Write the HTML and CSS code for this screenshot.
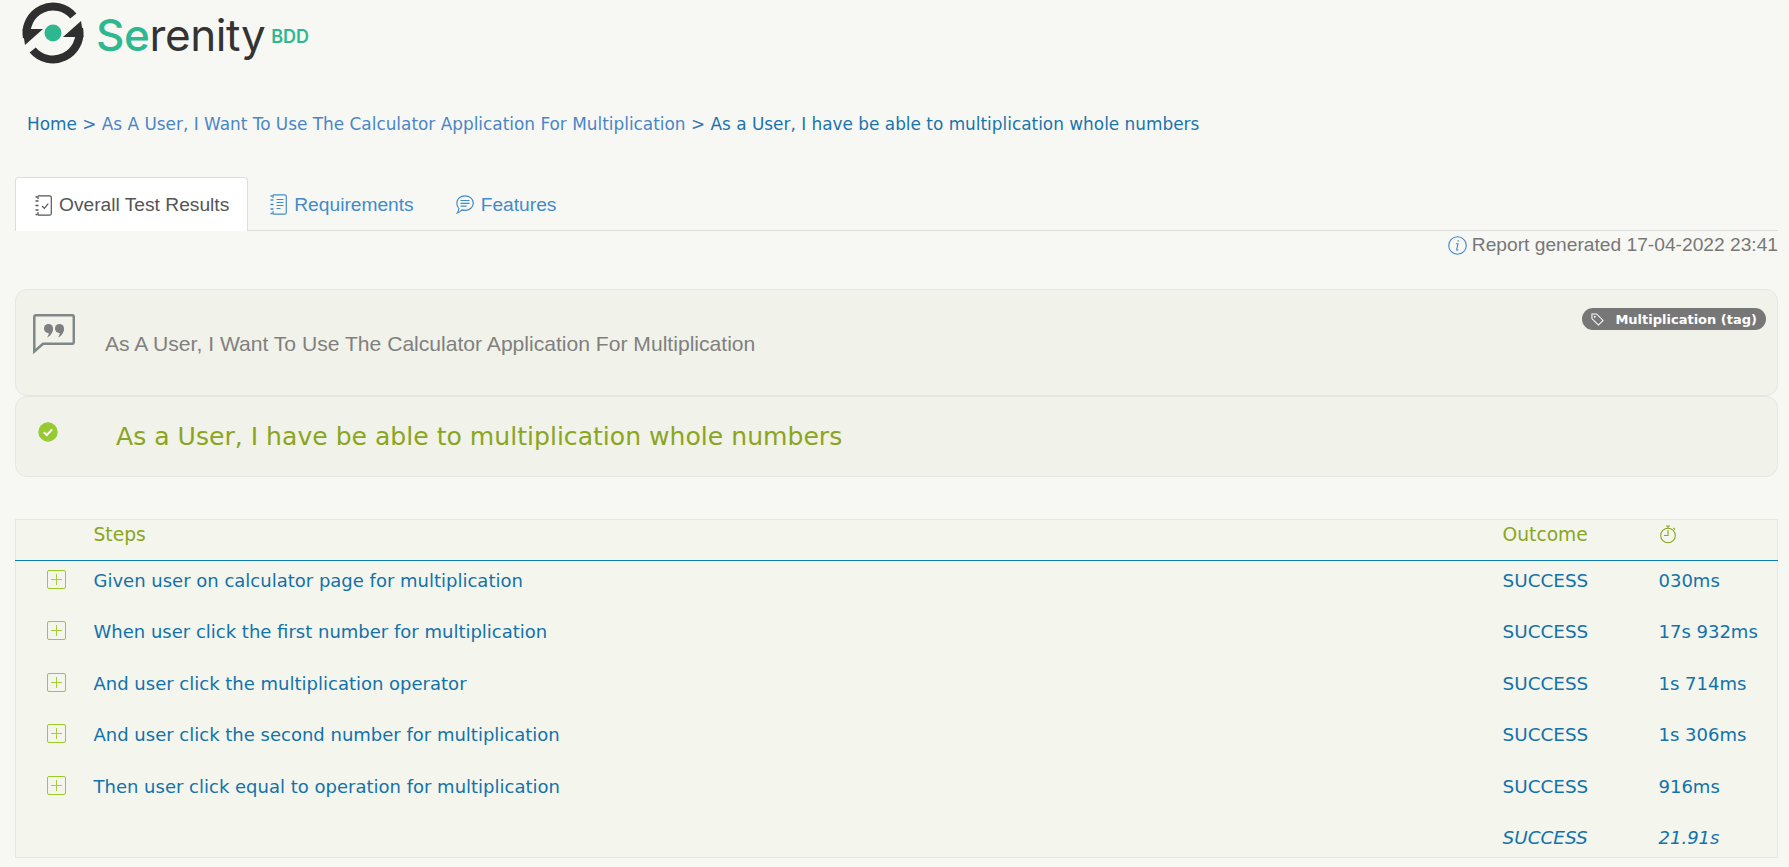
FILE: index.html
```html
<!DOCTYPE html>
<html lang="en">
<head>
<meta charset="utf-8">
<title>Serenity BDD</title>
<link rel="stylesheet" href="styles.css">
</head>
<body>
<header class="logo">
  <svg class="logo-mark" viewBox="0 0 62 62" width="62" height="62">
    <g fill="#2f2f2f">
      <path d="M51.3 14A26.5 26.5 0 0 0 4.9 35.6" fill="none" stroke="#2f2f2f" stroke-width="8"/>
      <path d="M0.5 27H21L3 43Z"/>
    </g>
    <g transform="rotate(180 31 31)" fill="#2f2f2f">
      <path d="M51.3 14A26.5 26.5 0 0 0 4.9 35.6" fill="none" stroke="#2f2f2f" stroke-width="8"/>
      <path d="M0.5 27H21L3 43Z"/>
    </g>
    <circle cx="31" cy="31" r="8.5" fill="#2fb88f"/>
  </svg>
  <span class="logo-name"><span class="logo-se">Se</span>renity</span>
  <span class="logo-bdd">BDD</span>
</header>

<nav class="crumbs">
  <a>Home</a> &gt; <a class="crumb-feature">As A User, I Want To Use The Calculator Application For Multiplication</a> &gt; <span>As a User, I have be able to multiplication whole numbers</span>
</nav>

<ul class="tabs">
  <li class="tab tab-active">
    <svg class="tab-icon" viewBox="0 0 17 21" width="17" height="21" fill="none" stroke="currentColor" stroke-width="1.2"><path d="M3 .8H14.500a1.800 1.800 0 0 1 1.800 1.800V18.400a1.800 1.800 0 0 1-1.800 1.800H3M3 .8V4M3 17v3.200"/><path d="M.5 6h3M.5 10.500h3M.5 15h3M.5 19.500h2M.5 2h2" stroke-width="1.500"/><path d="M7 11l2.300 2.300 4-4.600"/></svg>
    Overall Test Results
  </li>
  <li class="tab">
    <svg class="tab-icon" viewBox="0 0 17 21" width="17" height="21" fill="none" stroke="currentColor" stroke-width="1.2"><path d="M3 .8H14.500a1.800 1.800 0 0 1 1.800 1.800V18.400a1.800 1.800 0 0 1-1.800 1.800H3M3 .8V4M3 17v3.200"/><path d="M.5 6h3M.5 10.500h3M.5 15h3M.5 19.500h2M.5 2h2" stroke-width="1.500"/><path d="M6.500 5.500h7M6.500 8.500h7M6.500 11.500h7M6.500 14.500h4"/></svg>
    Requirements
  </li>
  <li class="tab">
    <svg class="tab-icon" viewBox="0 0 18 19" width="18" height="19" fill="none" stroke="currentColor" stroke-width="1.200"><path d="M9 .8c4.600 0 8.300 3.200 8.300 7.300S13.600 15.400 9 15.400c-1.100 0-2.200-.2-3.100-.5-1.100 1.200-2.800 2.600-4.700 3.100 .9-1.200 1.500-2.500 1.600-4.500C1.700 12.100 .8 10.200 .8 8.100 .8 4 4.400 .8 9 .8Z"/><path d="M4.500 5.500h9M4.500 8.300h9M4.500 11.100h6"/></svg>
    Features
  </li>
</ul>

<p class="generated">
  <svg class="info" viewBox="0 0 19 19" width="19" height="19" fill="none" stroke="#3f86cf" stroke-width="1.100"><circle cx="9.500" cy="9.500" r="8.800"/><path d="M8 7.800h2L8.600 14h1.800"/><circle cx="10.200" cy="5" r=".8" fill="#3f86cf" stroke="none"/></svg>
  Report generated 17-04-2022 23:41
</p>

<section class="panel panel-feature">
  <svg class="quote" viewBox="0 0 42 40" width="42" height="40">
    <path d="M1.300 3a1.800 1.800 0 0 1 1.800-1.800H39a1.800 1.800 0 0 1 1.800 1.800V28a1.800 1.800 0 0 1-1.800 1.800H10L1.300 37.500Z" fill="none" stroke="#7f8787" stroke-width="2.500"/>
    <g fill="#7f7f7f">
      <circle cx="15.500" cy="14.500" r="4.500"/>
      <circle cx="26.500" cy="14.500" r="4.500"/>
      <path d="M20 14.500C20 19 17 22.500 14 23.500 15.500 21.500 16 20 15.500 18.500Z"/>
      <path d="M31 14.500C31 19 28 22.500 25 23.500 26.500 21.500 27 20 26.500 18.500Z"/>
    </g>
  </svg>
  <span class="feature-title">As A User, I Want To Use The Calculator Application For Multiplication</span>
  <span class="tag">
    <svg class="tag-icon" viewBox="0 0 14 14" width="13" height="13" fill="none" stroke="#fff" stroke-width="1.100"><path d="M1 1h5l7 7-5 5-7-7Z"/><circle cx="4" cy="4" r="1" fill="#fff" stroke="none"/></svg>
    Multiplication (tag)
  </span>
</section>

<section class="panel panel-scenario">
  <svg class="ok" viewBox="0 0 20 20" width="20" height="20"><circle cx="10" cy="10" r="9.700" fill="#97c933"/><path d="M5.800 10.200l3 2.800 5.400-5.600" fill="none" stroke="#fff" stroke-width="2"/></svg>
  <h1 class="scenario-title">As a User, I have be able to multiplication whole numbers</h1>
</section>

<table class="steps">
  <colgroup><col class="col-icon"><col><col class="col-outcome"><col class="col-time"></colgroup>
  <thead>
    <tr>
      <th></th>
      <th>Steps</th>
      <th>Outcome</th>
      <th><svg class="watch" viewBox="0 0 18 20" width="18" height="20" fill="none" stroke="#8ba51f" stroke-width="1.100"><circle cx="9" cy="11.500" r="7.300"/><path d="M9 6v5.500H5M7 2h4M9 2v2.200M14.500 4l1.500 1.500"/></svg></th>
    </tr>
  </thead>
  <tbody>
    <tr>
      <td class="cell-icon"><span class="plus"></span></td>
      <td>Given user on calculator page for multiplication</td><td class="outcome">SUCCESS</td><td>030ms</td>
    </tr>
    <tr>
      <td class="cell-icon"><span class="plus"></span></td>
      <td>When user click the first number for multiplication</td><td class="outcome">SUCCESS</td><td>17s 932ms</td>
    </tr>
    <tr>
      <td class="cell-icon"><span class="plus"></span></td>
      <td>And user click the multiplication operator</td><td class="outcome">SUCCESS</td><td>1s 714ms</td>
    </tr>
    <tr>
      <td class="cell-icon"><span class="plus"></span></td>
      <td>And user click the second number for multiplication</td><td class="outcome">SUCCESS</td><td>1s 306ms</td>
    </tr>
    <tr>
      <td class="cell-icon"><span class="plus"></span></td>
      <td>Then user click equal to operation for multiplication</td><td class="outcome">SUCCESS</td><td>916ms</td>
    </tr>
    <tr class="total">
      <td></td><td></td><td class="outcome">SUCCESS</td><td>21.91s</td>
    </tr>
  </tbody>
</table>
</body>
</html>
```
FILE: styles.css
```css
* { box-sizing: border-box; }
html, body { margin: 0; padding: 0; }
body {
  background: #f7f8f3;
  font-family: "DejaVu Sans", Verdana, sans-serif;
  height: 867px;
  overflow: hidden;
  padding: 2px 11px 0 15px;
}
.logo {
  display: flex;
  align-items: flex-start;
  height: 62px;
  margin-left: 7px;
}
.logo-mark { flex: none; }
.logo-name {
  font-family: "Inter", sans-serif;
  font-size: 44px;
  line-height: 62px;
  color: #333;
  margin: 2px 0 0 12px;
  letter-spacing: -.4px;
}
.logo-se { color: #2fb88f; font-weight: 500; }
.logo-bdd {
  font-family: "Inter", sans-serif;
  font-size: 18px;
  font-weight: 600;
  color: #2fb88f;
  margin: 24px 0 0 6px;
  line-height: 22px;
}
.crumbs {
  margin: 49px 0 0 12px;
  font-size: 16.900px;
  line-height: 22px;
  color: #337ab7;
}
.crumb-feature { color: #4a86c5; }
.crumbs a:first-child, .crumbs span { color: #1a74ac; }
.tabs {
  list-style: none;
  display: flex;
  margin: 42px 0 0 0;
  padding: 0;
  height: 54px;
  border-bottom: 1px solid #ddd;
  font-family: "Liberation Sans", Arial, sans-serif;
  font-size: 19.200px;
}
.tab {
  display: flex;
  align-items: center;
  gap: 7px;
  height: 54px;
  padding: 1px 21px 0;
  color: #428bca;
  white-space: nowrap;
}
.tab-active {
  background: #fff;
  border: 1px solid #ddd;
  border-bottom: 0;
  border-radius: 4px 4px 0 0;
  color: #555;
  padding: 1px 18px 0 19px;
  margin-right: 1px;
}
.tab-icon { flex: none; }
.generated {
  margin: 3px 0 0 0;
  display: flex;
  justify-content: flex-end;
  align-items: center;
  gap: 5px;
  font-family: "Liberation Sans", Arial, sans-serif;
  font-size: 19.200px;
  line-height: 22px;
  color: #777;
}
.panel {
  position: relative;
  background: #f1f2e9;
  border: 1px solid #e6e7e0;
  border-radius: 12px;
  display: flex;
  align-items: flex-start;
}
.panel-feature {
  margin-top: 33px;
  height: 107px;
  padding: 24px 0 0 17px;
}
.quote { flex: none; }
.feature-title {
  font-family: "Liberation Sans", Arial, sans-serif;
  font-size: 21.100px;
  line-height: 24px;
  color: #808080;
  margin: 18px 0 0 30px;
}
.tag {
  position: absolute;
  top: 18px;
  right: 11px;
  height: 22px;
  padding: 0 9px;
  display: flex;
  align-items: center;
  gap: 11px;
  background: #777;
  border-radius: 11px;
  color: #fff;
  font-size: 13px;
  font-weight: 700;
  white-space: nowrap;
}
.panel-scenario {
  height: 81px;
  padding: 25px 0 0 22px;
}
.ok { flex: none; }
.scenario-title {
  margin: 0 0 0 58px;
  font-size: 25.100px;
  font-weight: 400;
  line-height: 29px;
  color: #8ba51f;
}
.steps {
  margin-top: 42px;
  width: 100%;
  table-layout: fixed;
  border-collapse: collapse;
  background: #f4f5ec;
  border: 1px solid #e6e7e0;
  font-size: 18px;
  line-height: 22px;
  color: #1272ab;
}
.col-icon { width: 78px; }
.col-outcome { width: 156px; }
.col-time { width: 119px; }
.steps th {
  height: 41px;
  padding: 4px 0 0;
  font-size: 18.700px;
  font-weight: 400;
  text-align: left;
  color: #8ba51f;
  border-bottom: 1px solid #0b7dbd;
  vertical-align: top;
}
.steps td {
  height: 51.500px;
  padding: 9px 0 0;
  white-space: nowrap;
  vertical-align: top;
}
.steps .cell-icon { padding-left: 31px; }
.steps .outcome { font-size: 18.400px; }
.plus {
  display: block;
  position: relative;
  width: 19px;
  height: 19px;
  border: 1px solid #9acb26;
  border-radius: 2px;
}
.plus::before, .plus::after {
  content: "";
  position: absolute;
  background: #a4cf3a;
}
.plus::before { left: 3px; right: 3px; top: 8px; height: 1px; }
.plus::after { top: 3px; bottom: 3px; left: 8px; width: 1px; }
.steps .total td { font-style: italic; height: 39.500px; }
.watch { display: block; }
```
